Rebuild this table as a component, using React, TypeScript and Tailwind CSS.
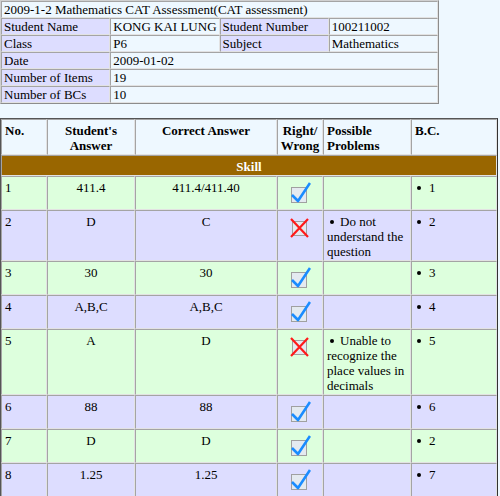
import React from "react";

type Row = {
  no: number;
  answer: string;
  correct: string;
  right: boolean;
  problem?: string;
  bc: number;
};

const rows: Row[] = [
  { no: 1, answer: "411.4", correct: "411.4/411.40", right: true, bc: 1 },
  { no: 2, answer: "D", correct: "C", right: false, problem: "Do not understand the question", bc: 2 },
  { no: 3, answer: "30", correct: "30", right: true, bc: 3 },
  { no: 4, answer: "A,B,C", correct: "A,B,C", right: true, bc: 4 },
  { no: 5, answer: "A", correct: "D", right: false, problem: "Unable to recognize the place values in decimals", bc: 5 },
  { no: 6, answer: "88", correct: "88", right: true, bc: 6 },
  { no: 7, answer: "D", correct: "D", right: true, bc: 2 },
  { no: 8, answer: "1.25", correct: "1.25", right: true, bc: 7 },
];

// inset-looking cell border, like an old border=1 html table
const cell =
  "border border-t-[#a4a4a4] border-l-[#a4a4a4] border-b-[#e2e2e2] border-r-[#e2e2e2] align-top";

function Tick() {
  return (
    <svg width="22" height="22" viewBox="0 0 22 22" className="block mx-auto mt-[2px] mb-[4px]">
      <rect x="2.5" y="5.5" width="15" height="15" fill="#e4eaf0" stroke="#a0a0a0" />
      <path d="M3 13 L9 19 L21 1" fill="none" stroke="#1a8cff" strokeWidth="2.6" strokeLinejoin="round" />
    </svg>
  );
}

function Cross() {
  return (
    <svg width="22" height="22" viewBox="0 0 22 22" className="block mx-auto mt-[2px] mb-[4px]">
      <rect x="3.5" y="5.5" width="14" height="14" fill="#e4eaf0" stroke="#a0a0a0" />
      <path d="M2 3 L19 21 M19 3 L2 21" fill="none" stroke="#ff1a1a" strokeWidth="2.2" />
    </svg>
  );
}

function Dot() {
  return <span className="inline-block w-[4px] h-[4px] rounded-full bg-black align-middle mb-[2px]" />;
}

export default function App() {
  const info = "bg-[#ddddff] px-[2px]";
  const val = "bg-[#eef8ff] px-[2px]";
  return (
    <div className="min-h-[496px] w-[500px] bg-[#eef8ff] font-['Liberation_Serif','Times_New_Roman',serif] text-[13px] leading-[15px] text-black overflow-hidden">
      <table className="w-[439px] table-fixed border-separate border-spacing-0 border border-t-[#d0d0d0] border-l-[#d0d0d0] border-b-[#8c8c8c] border-r-[#8c8c8c]">
        <tbody>
          <tr>
            <td colSpan={4} className={`${cell} ${val}`}>
              2009-1-2 Mathematics CAT Assessment(CAT assessment)
            </td>
          </tr>
          <tr>
            <td className={`${cell} ${info} w-[109px]`}>Student Name</td>
            <td className={`${cell} ${val} w-[108px]`}>KONG KAI LUNG</td>
            <td className={`${cell} ${info} w-[110px]`}>Student Number</td>
            <td className={`${cell} ${val}`}>100211002</td>
          </tr>
          <tr>
            <td className={`${cell} ${info}`}>Class</td>
            <td className={`${cell} ${val}`}>P6</td>
            <td className={`${cell} ${info}`}>Subject</td>
            <td className={`${cell} ${val}`}>Mathematics</td>
          </tr>
          <tr>
            <td className={`${cell} ${info}`}>Date</td>
            <td colSpan={3} className={`${cell} ${val}`}>2009-01-02</td>
          </tr>
          <tr>
            <td className={`${cell} ${info}`}>Number of Items</td>
            <td colSpan={3} className={`${cell} ${val}`}>19</td>
          </tr>
          <tr>
            <td className={`${cell} ${info}`}>Number of BCs</td>
            <td colSpan={3} className={`${cell} ${val}`}>10</td>
          </tr>
        </tbody>
      </table>

      <table className="mt-[14px] w-[498px] table-fixed border-separate border-spacing-0 border border-t-[#555] border-l-[#555] border-b-[#333] border-r-[#333]">
        <thead>
          <tr className="bg-[#eef8ff] font-bold">
            <th className={`${cell} w-[46px] text-left pl-[3px] pt-[3px] pb-[1px]`}>No.</th>
            <th className={`${cell} w-[88px] text-center pt-[3px] pb-[1px]`}>Student's Answer</th>
            <th className={`${cell} w-[142px] text-center pt-[3px] pb-[1px]`}>Correct Answer</th>
            <th className={`${cell} w-[46px] text-center pt-[3px] pb-[1px]`}>Right/ Wrong</th>
            <th className={`${cell} w-[88px] text-left pl-[3px] pt-[3px] pb-[1px]`}>Possible Problems</th>
            <th className={`${cell} text-left pl-[3px] pt-[3px] pb-[1px]`}>B.C.</th>
          </tr>
        </thead>
        <tbody>
          <tr>
            <td colSpan={6} className={`${cell} bg-[#996600] text-white font-bold text-center pt-[3px] pb-[1px]`}>
              Skill
            </td>
          </tr>
          {rows.map((r, i) => {
            const bg = i % 2 === 0 ? "bg-[#ddffdd]" : "bg-[#ddddff]";
            return (
              <tr key={r.no} className={bg}>
                <td className={`${cell} pl-[3px] pt-[3px] pb-[1px]`}>{r.no}</td>
                <td className={`${cell} text-center pt-[3px] pb-[1px]`}>{r.answer}</td>
                <td className={`${cell} text-center pt-[3px] pb-[1px]`}>{r.correct}</td>
                <td className={`${cell} pt-[3px] pb-[1px]`}>{r.right ? <Tick /> : <Cross />}</td>
                <td className={`${cell} px-[3px] pt-[3px] pb-[1px]`}>
                  {r.problem && (
                    <div>
                      <span className="ml-[3px] mr-[6px]">
                        <Dot />
                      </span>
                      {r.problem}
                    </div>
                  )}
                </td>
                <td className={`${cell} pl-[5px] pt-[3px] pb-[1px]`}>
                  <span className="mr-[8px]">
                    <Dot />
                  </span>
                  {r.bc}
                </td>
              </tr>
            );
          })}
        </tbody>
      </table>
    </div>
  );
}
